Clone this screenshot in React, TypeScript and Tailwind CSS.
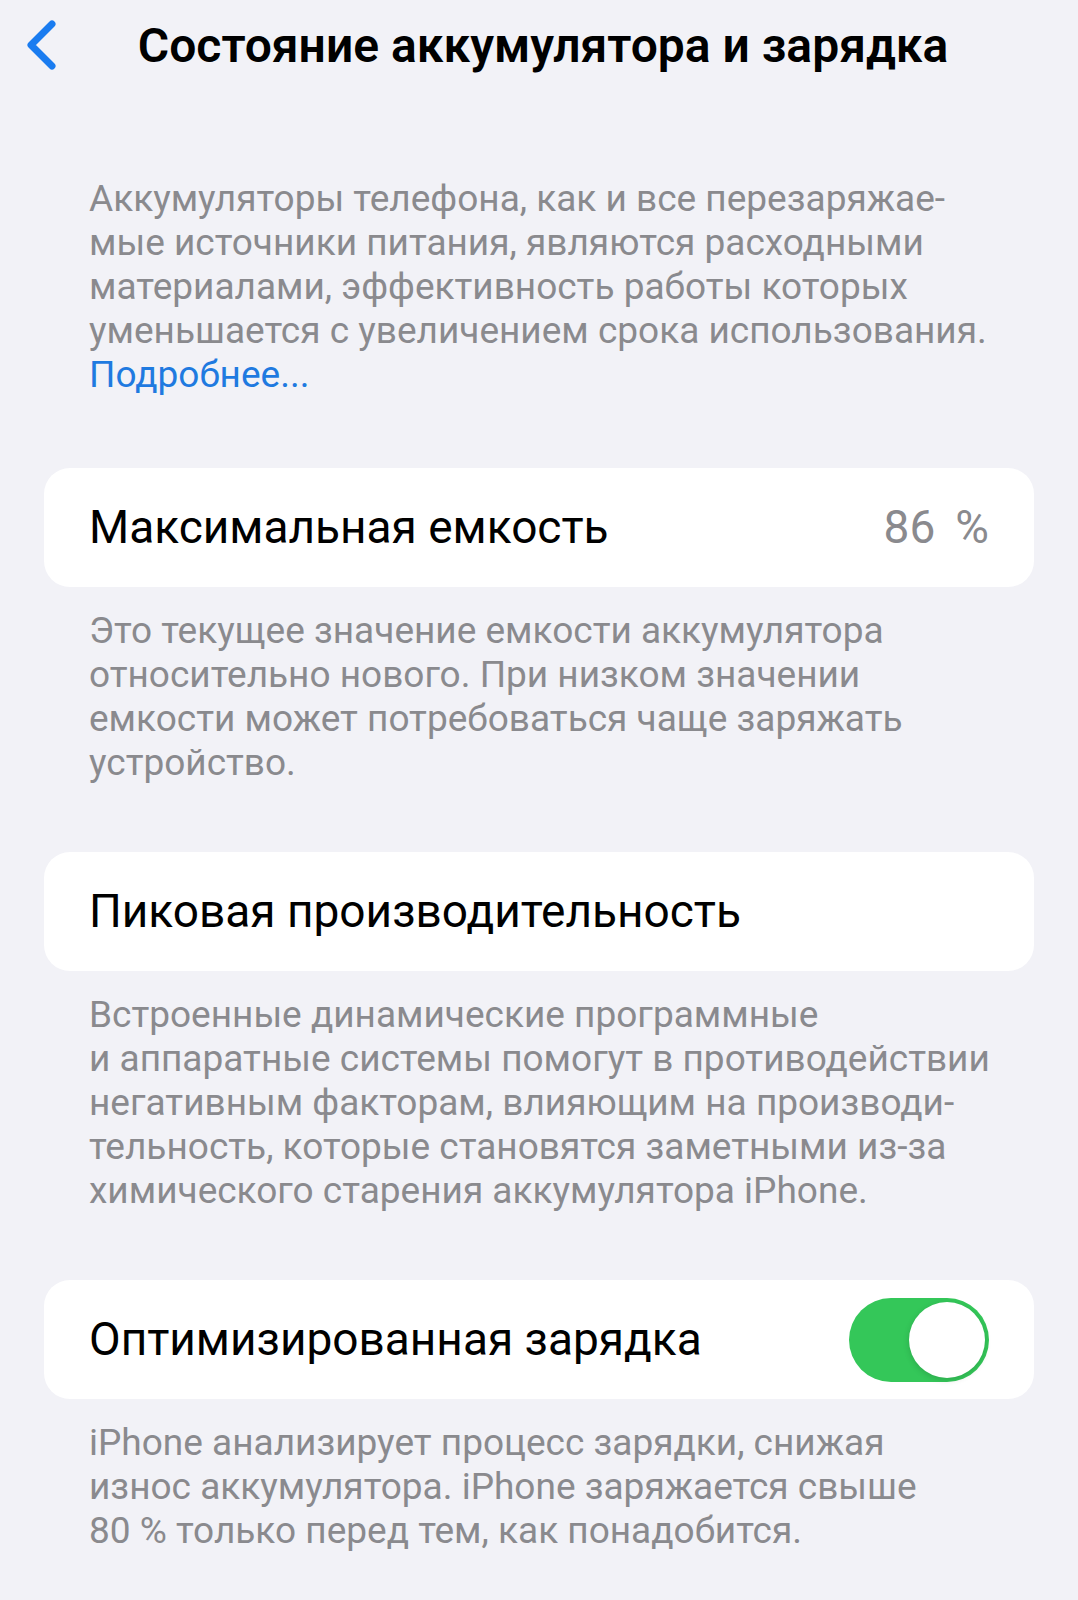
import React from "react";

const font = { fontFamily: "Roboto, 'Noto Sans', sans-serif" };

function Footnote({ lines, link }: { lines: string[]; link?: string }) {
  return (
    <div className="px-[45px] text-[37px] leading-[44px] text-[#8a8a8e]">
      {lines.map((l, i) => (
        <div key={i} className="whitespace-nowrap">
          {l}
        </div>
      ))}
      {link && <div className="whitespace-nowrap text-[#1f7ae0]">{link}</div>}
    </div>
  );
}

function Card({ children }: { children: React.ReactNode }) {
  return (
    <div className="flex h-[119px] items-center justify-between rounded-[26px] bg-white px-[45px]">
      {children}
    </div>
  );
}

export default function App() {
  return (
    <div className="min-h-[1600px] w-[1078px] bg-[#f2f2f7]" style={font}>
      {/* navigation bar */}
      <div className="relative flex h-[92px] items-center justify-center">
        <svg
          className="absolute left-[20px] top-[14px]"
          width="40"
          height="62"
          viewBox="0 0 40 62"
          fill="none"
        >
          <polyline
            points="32,10 11,31 32,52"
            stroke="#1a7cf0"
            strokeWidth="7"
            strokeLinecap="round"
            strokeLinejoin="round"
          />
        </svg>
        <div className="pl-[8px] text-[48px] font-semibold text-black">
          Состояние аккумулятора и зарядка
        </div>
      </div>

      <div className="px-[44px]">
        <div className="pt-[85px]">
          <Footnote
            lines={[
              "Аккумуляторы телефона, как и все перезаряжае-",
              "мые источники питания, являются расходными",
              "материалами, эффективность работы которых",
              "уменьшается с увеличением срока использования.",
            ]}
            link="Подробнее..."
          />
        </div>

        <div className="mt-[71px]">
          <Card>
            <span className="text-[46px] text-black">Максимальная емкость</span>
            <span className="flex text-[46px] text-[#8a8a8e]">
              <span>86</span>
              <span className="ml-[20px]">%</span>
            </span>
          </Card>
        </div>

        <div className="mt-[22px]">
          <Footnote
            lines={[
              "Это текущее значение емкости аккумулятора",
              "относительно нового. При низком значении",
              "емкости может потребоваться чаще заряжать",
              "устройство.",
            ]}
          />
        </div>

        <div className="mt-[67px]">
          <Card>
            <span className="text-[46px] text-black">Пиковая производительность</span>
          </Card>
        </div>

        <div className="mt-[22px]">
          <Footnote
            lines={[
              "Встроенные динамические программные",
              "и аппаратные системы помогут в противодействии",
              "негативным факторам, влияющим на производи-",
              "тельность, которые становятся заметными из-за",
              "химического старения аккумулятора iPhone.",
            ]}
          />
        </div>

        <div className="mt-[67px]">
          <Card>
            <span className="text-[46px] text-black">Оптимизированная зарядка</span>
            <div className="flex h-[84px] w-[140px] items-center justify-end rounded-full bg-[#34c759] px-[4px]">
              <div className="h-[76px] w-[76px] rounded-full bg-white shadow-[0_2px_6px_rgba(0,0,0,0.15)]" />
            </div>
          </Card>
        </div>

        <div className="mt-[22px]">
          <Footnote
            lines={[
              "iPhone анализирует процесс зарядки, снижая",
              "износ аккумулятора. iPhone заряжается свыше",
              "80 % только перед тем, как понадобится.",
            ]}
          />
        </div>
      </div>
    </div>
  );
}
